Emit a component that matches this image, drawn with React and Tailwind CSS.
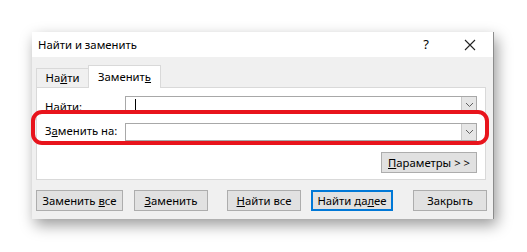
import React from 'react';

const font = { fontFamily: '"Noto Sans", "Segoe UI", sans-serif' };

const Chevron = () => (
  <svg width="9" height="6" viewBox="0 0 9 6" className="text-[#606060]">
    <path d="M1 1 L4.5 4.5 L8 1" fill="none" stroke="currentColor" strokeWidth="1" />
  </svg>
);

const Combo = ({ cursor }) => (
  <div className="flex h-[18px] w-[353px] border border-[#a8a8a8] bg-white">
    <div className="flex-1 flex items-center pl-[9px]">
      {cursor && <div className="h-[13px] w-px bg-black" />}
    </div>
    <div className="flex w-[15px] items-center justify-center border-l border-[#c8c8c8] bg-[#e6e6e6]">
      <Chevron />
    </div>
  </div>
);

const Btn = ({ children, className = '', focused }) => (
  <button
    className={`flex h-[21px] items-center justify-center bg-[#e1e1e1] text-[11.3px] leading-none text-black ${
      focused ? 'border-2 border-[#0078d7]' : 'border border-[#adadad]'
    } ${className}`}
  >
    <span>{children}</span>
  </button>
);

export default function App() {
  return (
    <div className="relative h-[252px] w-[527px] overflow-hidden bg-white" style={font}>
      <div className="ml-[32px] mt-[32px] flex h-[187px] w-[462px] flex-col border-r border-[#8c8c8c] bg-[#f0f0f0] shadow-[3px_6px_14px_rgba(0,0,0,0.4)]">
        {/* title bar */}
        <div className="flex h-[25px] items-center bg-white pl-[6px] text-[11.3px] text-black">
          <span className="pt-[1px]">Найти и заменить</span>
          <span className="ml-auto mr-[35px] text-[13px]">?</span>
          <svg width="12" height="12" viewBox="0 0 12 12" className="mr-[17px]">
            <path d="M1 1 L11 11 M11 1 L1 11" stroke="#222" strokeWidth="1.1" />
          </svg>
        </div>

        {/* tabs */}
        <div className="mt-[8px] flex pl-[4px] text-[11.3px] text-black">
          <div className="mt-[3px] flex h-[19px] w-[52px] items-center justify-center border-l border-t border-[#d9d9d9]">
            <span>
              На<u>й</u>ти
            </span>
          </div>
          <div className="relative z-10 -mb-px flex h-[23px] w-[73px] items-center justify-center border border-b-0 border-[#d9d9d9] bg-white">
            <span>
              Заменит<u>ь</u>
            </span>
          </div>
        </div>

        {/* panel */}
        <div className="ml-[4px] flex h-[93px] w-[450px] flex-col border border-[#d9d9d9] bg-white px-[8px] pt-[7px] text-[11.3px] text-black">
          <div className="flex items-center">
            <span className="w-[80px] pt-[4px]">Найти:</span>
            <Combo cursor />
          </div>
          <div className="mt-[7px] flex items-center">
            <span className="w-[80px] -mt-[1px]">
              З<u>а</u>менить на:
            </span>
            <Combo />
          </div>
          <div className="mt-[11px] flex justify-end">
            <Btn className="w-[96px]">
              <u>П</u>араметры &gt; &gt;
            </Btn>
          </div>
        </div>

        {/* bottom buttons */}
        <div className="mt-[10px] flex pl-[4px]">
          <Btn className="w-[87px]">
            Заменить <u>в</u>се
          </Btn>
          <Btn className="ml-[11px] w-[74px]">
            <u>З</u>аменить
          </Btn>
          <Btn className="ml-[19px] w-[74px]">
            <u>Н</u>айти все
          </Btn>
          <Btn className="ml-[10px] w-[82px]" focused>
            Найти да<u>л</u>ее
          </Btn>
          <Btn className="ml-[20px] w-[74px]">Закрыть</Btn>
        </div>
      </div>

      {/* red highlight */}
      <div className="pointer-events-none absolute left-[31px] top-[110px] h-[35px] w-[458px] rounded-[11px] border-[4px] border-[#e8141c]" />
    </div>
  );
}
